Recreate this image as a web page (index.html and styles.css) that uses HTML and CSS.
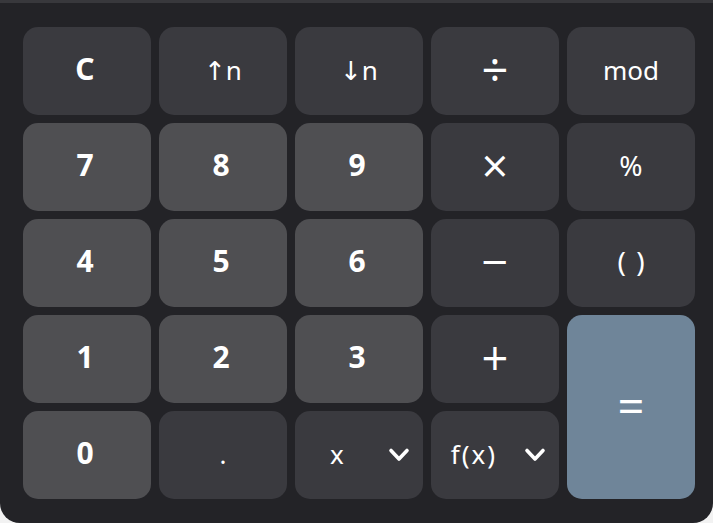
FILE: index.html
```html
<!DOCTYPE html>
<html lang="en">
<head>
  <meta charset="UTF-8" />
  <title>Calculator</title>
  <link rel="stylesheet" href="styles.css">
</head>
<body>
  <div class="teclado">
    <button class="tecla fuerte">C</button>
    <button class="tecla">↑n</button>
    <button class="tecla">↓n</button>
    <button class="tecla op">÷</button>
    <button class="tecla">mod</button>

    <button class="tecla num">7</button>
    <button class="tecla num">8</button>
    <button class="tecla num">9</button>
    <button class="tecla op">×</button>
    <button class="tecla grande">%</button>

    <button class="tecla num">4</button>
    <button class="tecla num">5</button>
    <button class="tecla num">6</button>
    <button class="tecla op">−</button>
    <button class="tecla grande parentesis">( )</button>

    <button class="tecla num">1</button>
    <button class="tecla num">2</button>
    <button class="tecla num">3</button>
    <button class="tecla op">+</button>
    <button class="tecla igual">=</button>

    <button class="tecla num">0</button>
    <button class="tecla">.</button>
    <div class="tecla selector">
      <span class="selector-texto">x</span>
      <svg class="flecha" width="22" height="16" viewBox="0 0 22 16"><path d="M3 3.5 L11 12 L19 3.5" fill="none" stroke="#fff" stroke-width="3.6" stroke-linecap="round" stroke-linejoin="round"/></svg>
    </div>
    <div class="tecla selector">
      <span class="selector-texto">f(x)</span>
      <svg class="flecha" width="22" height="16" viewBox="0 0 22 16"><path d="M3 3.5 L11 12 L19 3.5" fill="none" stroke="#fff" stroke-width="3.6" stroke-linecap="round" stroke-linejoin="round"/></svg>
    </div>
  </div>
</body>
</html>
```

FILE: styles.css
```css
html, body {
  margin: 0;
  background: #f2f2f2;
}

.teclado {
  box-sizing: border-box;
  width: 713px;
  height: 523px;
  background: #232327;
  border-top: 3px solid #38383c;
  border-radius: 0 0 20px 20px;
  padding: 24px 18px 24px 23px;
  display: grid;
  grid-template-columns: repeat(5, 128px);
  grid-template-rows: repeat(5, 88px);
  gap: 8px;
  font-family: "Noto Sans", "DejaVu Sans", sans-serif;
}

.tecla {
  border: none;
  margin: 0;
  padding: 0 0 2px;
  border-radius: 15px;
  background: #3a3a3f;
  color: #fff;
  font-family: inherit;
  font-size: 26px;
  font-weight: 400;
  display: flex;
  align-items: center;
  justify-content: center;
}

.grande {
  font-size: 28px;
  padding: 0 0 4px;
}

.parentesis {
  word-spacing: 3px;
}

.fuerte, .num {
  font-size: 30px;
  font-weight: 700;
  padding: 0 4px 5px 0;
}

.num {
  background: #4f4f52;
}

.op, .igual {
  font-family: "Open Sans", "Noto Sans", sans-serif;
  font-size: 47px;
  font-weight: 400;
  line-height: 1;
  padding: 0 0 4px;
}

.igual {
  grid-row: span 2;
  background: #6f8599;
}

.selector {
  position: relative;
  padding: 0 0 2px;
}

.selector-texto {
  margin-right: 42px;
  letter-spacing: 2px;
}

.flecha {
  position: absolute;
  right: 13px;
  top: 36px;
}
```
